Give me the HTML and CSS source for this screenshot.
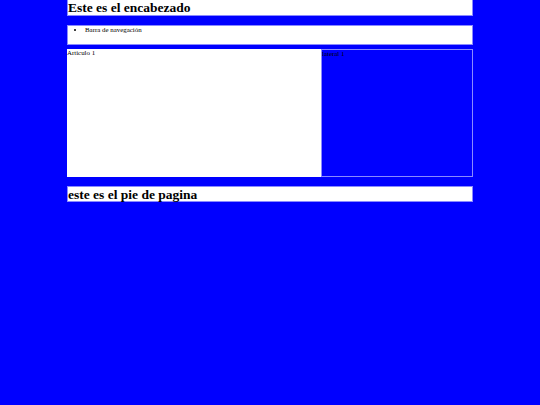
FILE: index.html
```html
<!DOCTYPE html>
<html lang="es">
<head>
<meta charset="utf-8">
<title>Maquetación</title>
<link rel="stylesheet" href="styles.css">
</head>
<body>
<div class="contenedor">
  <header class="encabezado">
    <h1 class="titulo">Este es el encabezado</h1>
  </header>
  <nav class="navegacion">
    <ul class="menu">
      <li>Barra de navegación</li>
    </ul>
  </nav>
  <section class="contenido">
    <article class="articulo">Articulo 1</article>
    <aside class="lateral">lateral 1</aside>
  </section>
  <footer class="pie">
    <h2 class="titulo">este es el pie de pagina</h2>
  </footer>
</div>
</body>
</html>
```
FILE: styles.css
```css
html, body {
  margin: 0;
  padding: 0;
  background: #0000ff;
}
body {
  font-family: "Liberation Serif", "Times New Roman", serif;
  font-size: 6.9px;
  color: #000;
}
.contenedor {
  width: 406px;
  margin: 0 auto;
}
.encabezado {
  background: #fff;
  border: 1px solid #8a8aff;
  border-top: 0;
  height: 15px;
}
.titulo {
  margin: 0;
  font-size: 13.5px;
  line-height: 15px;
  font-weight: bold;
}
.navegacion {
  margin-top: 9px;
  background: #fff;
  border: 1px solid #8a8aff;
  height: 18px;
}
.menu {
  margin: 0;
  padding: 0 0 0 17px;
  line-height: 7.2px;
}
.contenido {
  display: flex;
  margin-top: 4px;
  height: 128px;
}
.articulo {
  width: 254px;
  background: #fff;
  line-height: 8.4px;
}
.lateral {
  flex: 1;
  border: 1px solid #8a8aff;
  line-height: 8.4px;
  color: #000;
}
.pie {
  margin-top: 9px;
  background: #fff;
  border: 1px solid #8a8aff;
  height: 14px;
}
.pie .titulo {
  line-height: 15px;
}
```
